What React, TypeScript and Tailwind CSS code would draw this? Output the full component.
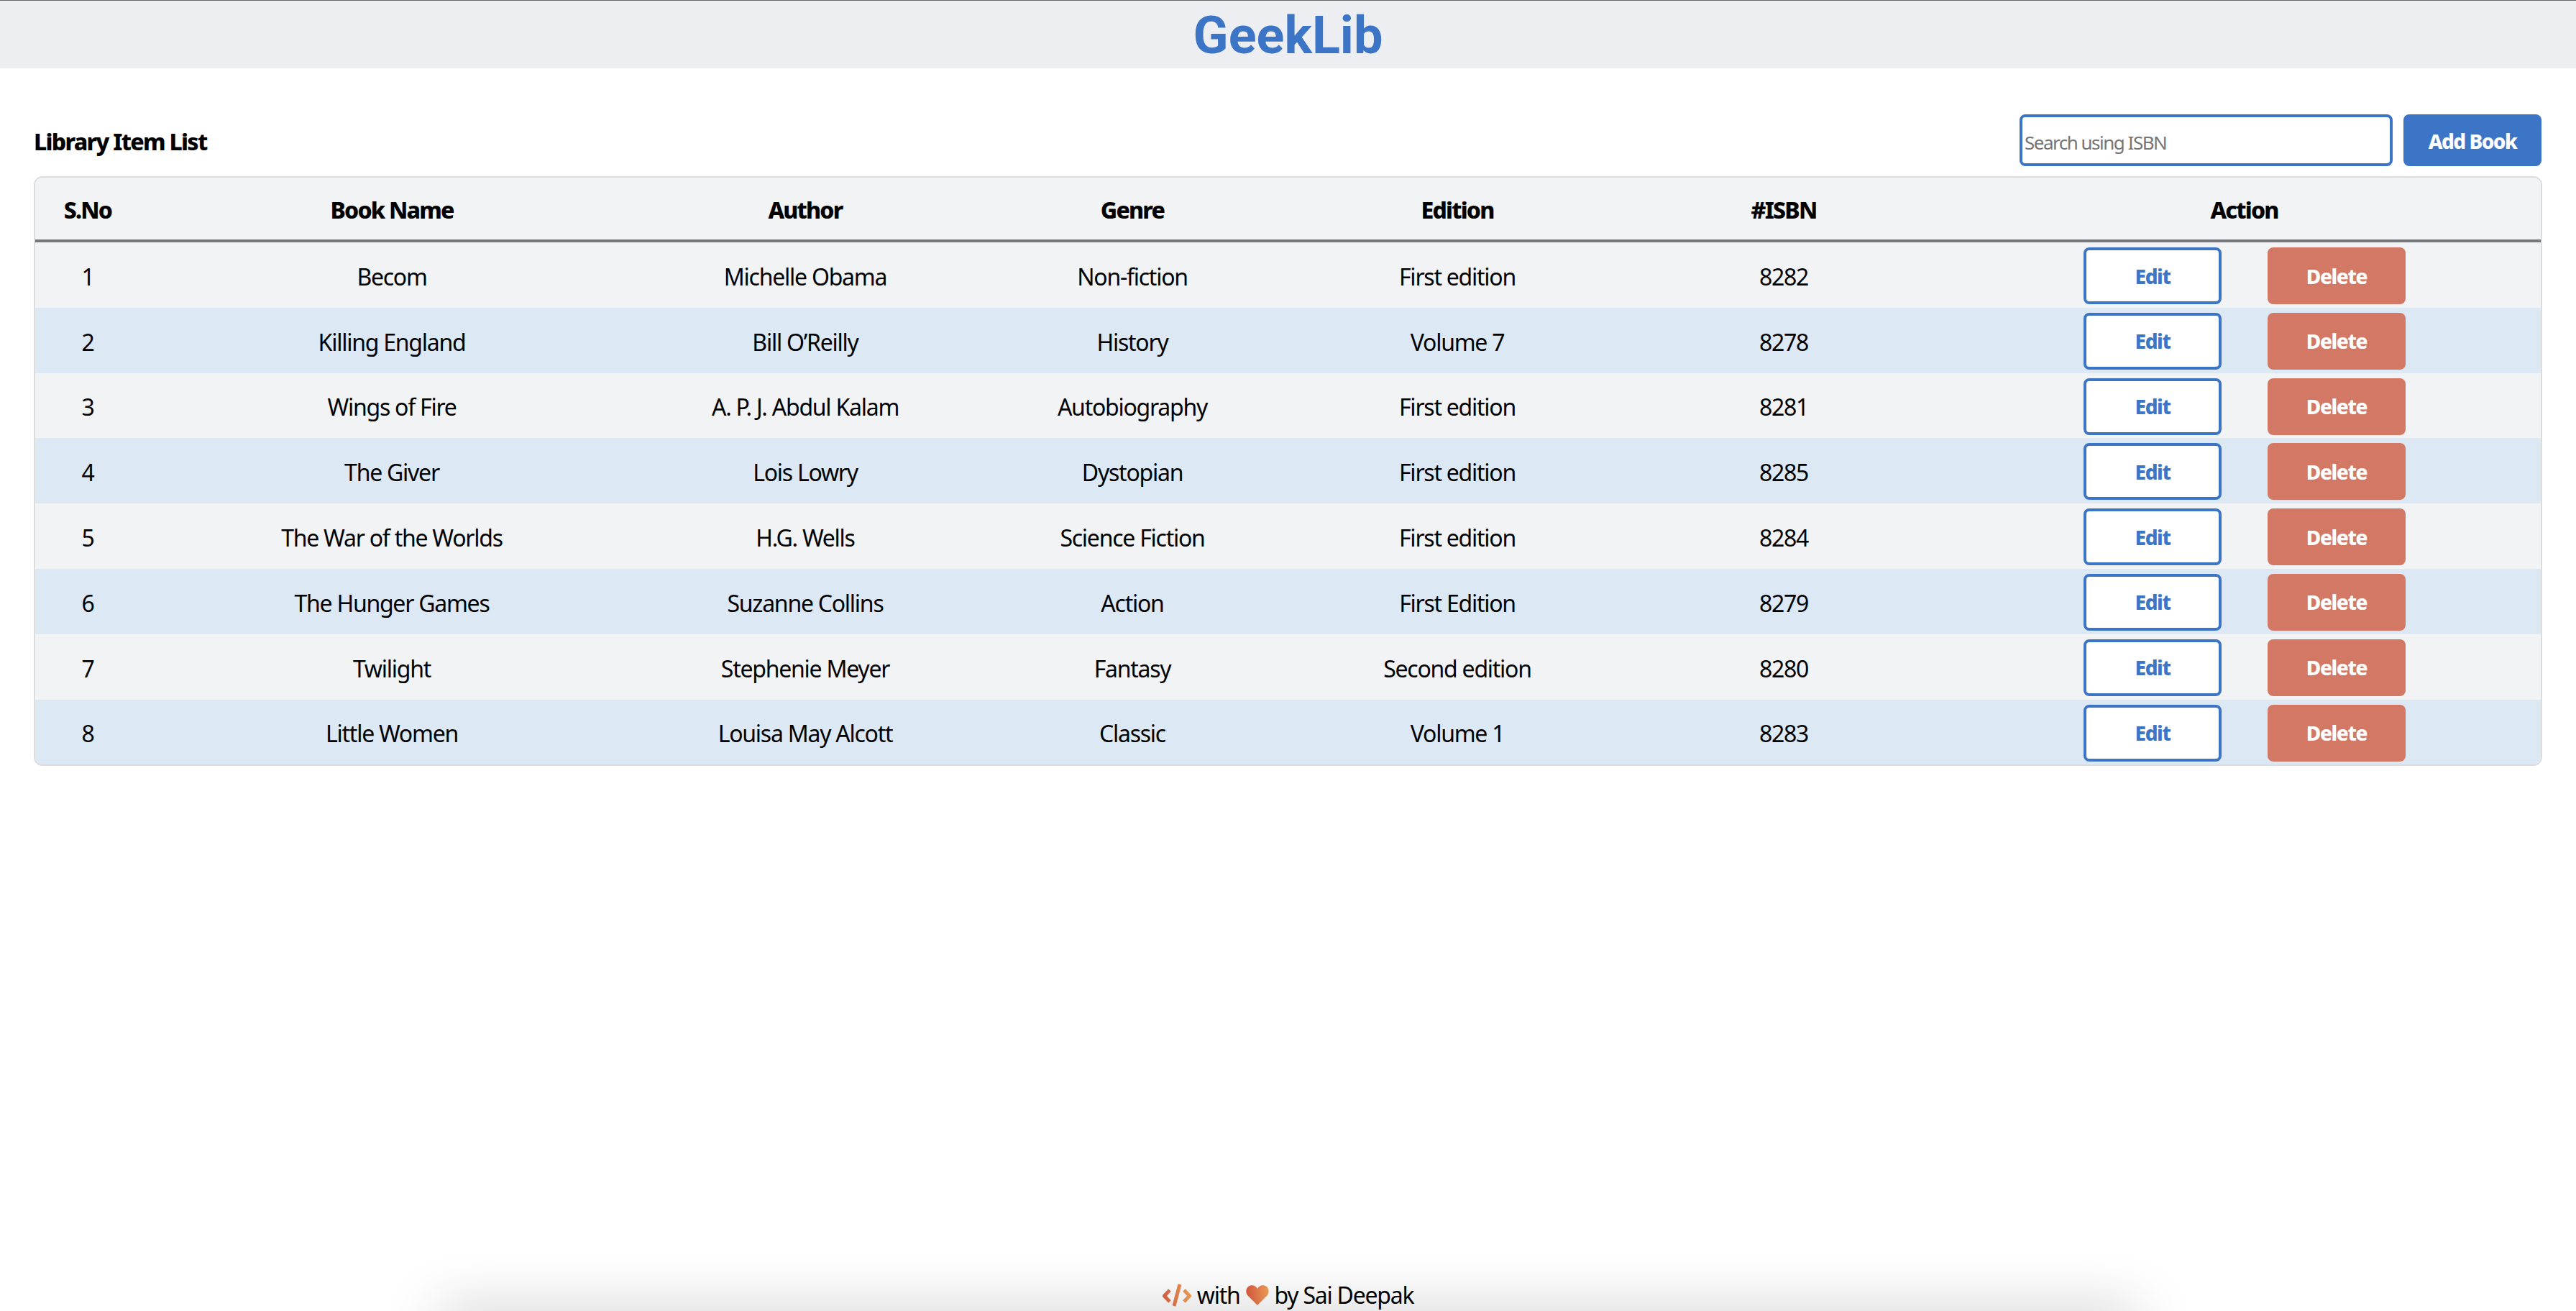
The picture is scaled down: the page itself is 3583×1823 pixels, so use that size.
const rows = [
  ["1", "Becom", "Michelle Obama", "Non-fiction", "First edition", "8282"],
  ["2", "Killing England", "Bill O’Reilly", "History", "Volume 7", "8278"],
  ["3", "Wings of Fire", "A. P. J. Abdul Kalam", "Autobiography", "First edition", "8281"],
  ["4", "The Giver", "Lois Lowry", "Dystopian", "First edition", "8285"],
  ["5", "The War of the Worlds", "H.G. Wells", "Science Fiction", "First edition", "8284"],
  ["6", "The Hunger Games", "Suzanne Collins", "Action", "First Edition", "8279"],
  ["7", "Twilight", "Stephenie Meyer", "Fantasy", "Second edition", "8280"],
  ["8", "Little Women", "Louisa May Alcott", "Classic", "Volume 1", "8283"],
];
const heads = ["S.No", "Book Name", "Author", "Genre", "Edition", "#ISBN"];
const widths = ["w-[146px]", "w-[700px]", "w-[450px]", "w-[460px]", "w-[444px]", "w-[464px]"];

function CodeIcon() {
  return (
    <svg width="40" height="32" viewBox="0 0 40 32" className="shrink-0">
      <defs>
        <linearGradient id="cg" gradientUnits="userSpaceOnUse" x1="0" y1="0" x2="40" y2="0">
          <stop offset="0" stopColor="#dd6244" />
          <stop offset="1" stopColor="#f2a45c" />
        </linearGradient>
      </defs>
      <path d="M10 9 L2.500 17 L10 25 M30 9 L37.500 17 L30 25 M24 1 L16 31" fill="none" stroke="url(#cg)" strokeWidth="5" />
    </svg>
  );
}

function HeartIcon() {
  return (
    <svg width="32" height="28" viewBox="0 0 32 28" className="shrink-0">
      <defs>
        <linearGradient id="hg" x1="0" y1="0" x2="1" y2="0">
          <stop offset="0" stopColor="#de5a40" />
          <stop offset="1" stopColor="#f3a35c" />
        </linearGradient>
      </defs>
      <path d="M16 28 L2.500 14.500 C-1 10.500 -0.500 3 5.500 0.800 C10 -0.600 14 1.500 16 5 C18 1.500 22 -0.600 26.500 0.800 C32.500 3 33 10.500 29.500 14.500 Z" fill="url(#hg)" />
    </svg>
  );
}

export default function App() {
  return (
    <div className="h-screen overflow-hidden flex flex-col bg-white text-black font-['Noto_Sans',sans-serif]">
      <header className="h-[95px] shrink-0 bg-[#eceef1] border-t border-t-[#666] flex items-center justify-center">
        <h1 className="text-[72px] leading-none font-bold text-[#3d75c6] font-['Roboto',sans-serif] pt-[3px]">GeekLib</h1>
      </header>
      <main className="flex-1 px-[47px]">
        <div className="flex items-center justify-between h-[72px] mt-[64px] mb-[14px]">
          <h2 className="text-[32px] font-extrabold tracking-[-1.7px] pt-[3px]">Library Item List</h2>
          <div className="flex gap-[15px] mr-[1px]">
            <input
              placeholder="Search using ISBN"
              className="w-[519px] h-[72px] border-4 border-[#3d75c6] rounded-[8px] px-[3px] pt-[6px] text-[26px] tracking-[-1.5px] bg-white placeholder:text-[#757575] outline-none"
            />
            <button className="w-[192px] h-[72px] rounded-[8px] bg-[#3d75c6] text-white text-[28px] font-extrabold tracking-[-1.5px] pt-[2px]">Add Book</button>
          </div>
        </div>
        <div className="border-2 border-[#dcdcdc] rounded-[12px] overflow-hidden">
          <table className="w-full table-fixed border-separate border-spacing-0 text-[32px] tracking-[-1.25px]">
            <thead>
              <tr className="h-[90px] bg-[#f2f3f5]">
                {heads.map((h, i) => (
                  <th key={h} className={`${widths[i]} font-extrabold text-center tracking-[-1.8px] pt-[3px] border-b-4 border-b-[#76777a]`}>{h}</th>
                ))}
                <th className="font-extrabold text-center tracking-[-1.8px] pt-[3px] pr-[4px] border-b-4 border-b-[#76777a]">Action</th>
              </tr>
            </thead>
            <tbody>
              {rows.map((r, i) => (
                <tr key={r[0]} className={`h-[90.8px] ${i % 2 ? "bg-[#dce8f4]" : "bg-[#f2f3f5]"}`}>
                  {r.map((c, j) => (
                    <td key={j} className="text-center align-middle pt-[5px]">{c}</td>
                  ))}
                  <td className="align-top pt-[7px]">
                    <div className="flex gap-[64px] pl-[185px]">
                      <button className="w-[192px] h-[79px] bg-white border-4 border-[#3d75c6] rounded-[8px] text-[#3d75c6] text-[28px] font-extrabold tracking-[-1.4px]">Edit</button>
                      <button className="w-[192px] h-[79px] bg-[#d27865] rounded-[8px] text-white text-[28px] font-extrabold tracking-[-1.4px]">Delete</button>
                    </div>
                  </td>
                </tr>
              ))}
            </tbody>
          </table>
        </div>
      </main>
      <footer className="relative h-[46px] shrink-0 flex items-center justify-center gap-[8px] text-[32px] tracking-[-1.25px] pt-[2px]">
        <div className="absolute left-[610px] right-[610px] top-full h-10 shadow-[0_0_80px_rgba(0,0,0,0.24)]" />
        <CodeIcon />
        <span>with</span>
        <HeartIcon />
        <span>by Sai Deepak</span>
      </footer>
    </div>
  );
}
